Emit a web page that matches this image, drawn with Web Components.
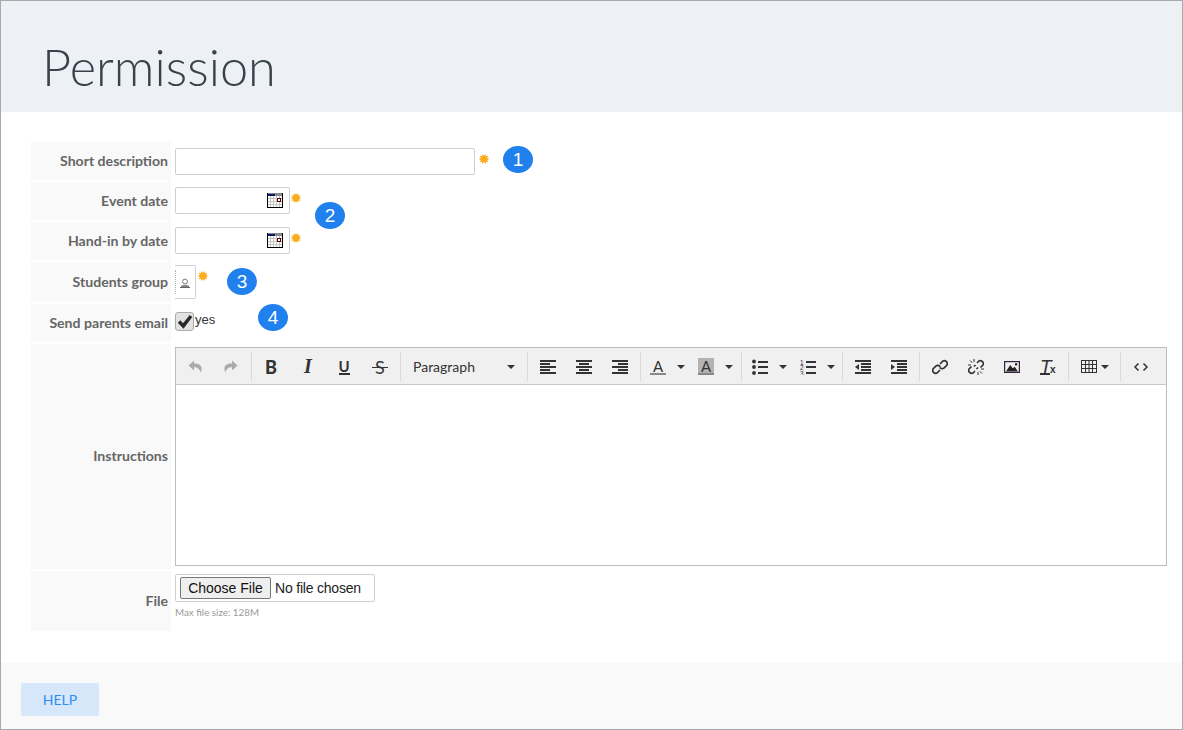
<!DOCTYPE html>
<html lang="en">
<head>
<meta charset="utf-8">
<title>Permission</title>
<style>
html,body{margin:0;padding:0;background:#fff}
body{font-family:Lato,"Liberation Sans",sans-serif;color:#333}
</style>
</head>
<body>
<app-page>
  <page-header slot="header">Permission</page-header>
  <form-grid>
    <form-row label="Short description" pad="6px 0 5px"><text-field width="300"></text-field><req-star gap="4" top="6"></req-star></form-row>
    <form-row label="Event date" pad="5px 0 6px"><date-field></date-field><req-star gap="1" top="6"></req-star></form-row>
    <form-row label="Hand-in by date" pad="5px 0 6px"><date-field></date-field><req-star gap="1" top="6"></req-star></form-row>
    <form-row label="Students group" pad="3px 0"><group-picker></group-picker><req-star gap="2" top="6"></req-star></form-row>
    <form-row label="Send parents email" pad="8px 0 11px"><check-field>yes</check-field></form-row>
    <form-row label="Instructions" pad="3px 0" lift="1"><rich-editor></rich-editor></form-row>
    <form-row label="File" pad="3px 0 12px"><file-field></file-field></form-row>
    <hint-badge x="472" y="4">1</hint-badge>
    <hint-badge x="284" y="60">2</hint-badge>
    <hint-badge x="196" y="126">3</hint-badge>
    <hint-badge x="227" y="162">4</hint-badge>
  </form-grid>
  <page-footer slot="footer"><help-button>HELP</help-button></page-footer>
</app-page>

<script>
function shadow(el, html){ el.attachShadow({mode:'open'}).innerHTML = html; }
const svg16 = (body, w=16, h=16) => `<svg xmlns="http://www.w3.org/2000/svg" width="${w}" height="${h}" viewBox="0 0 ${w} ${h}" aria-hidden="true">${body}</svg>`;
const bars = (rows) => rows.map(([x,y,w,h=2,c='#333']) => `<rect x="${x}" y="${y}" width="${w}" height="${h}" fill="${c}"/>`).join('');
const rays5 = `<g stroke="#333" stroke-width="1" fill="none"><path d="M6 0v3M2 1.500l2.200 2.200M0 6h3M10 16v-3M14 14.500l-2.200-2.200M16 10h-3"/></g>`;

const ICONS = {
  undo: (c)=>svg16(`<path fill="${c}" d="M7 1.500 1.500 6.500 7 11.500V8.300c3.200 0 5.300 1 6.600 5.200.7-1.300 1-2.600 1-3.800C14.600 6.500 11.800 4.500 7 4.600z"/>`),
  redo: (c)=>svg16(`<path fill="${c}" d="M9 1.500 14.500 6.500 9 11.500V8.300c-3.200 0-5.300 1-6.600 5.200-.7-1.300-1-2.600-1-3.800C1.400 6.500 4.200 4.500 9 4.600z"/>`),
  left: ()=>svg16(bars([[0,1,16],[0,4,10],[0,7,16],[0,10,10],[0,13,16]])),
  center: ()=>svg16(bars([[0,1,16],[3,4,10],[0,7,16],[3,10,10],[0,13,16]])),
  right: ()=>svg16(bars([[0,1,16],[6,4,10],[0,7,16],[6,10,10],[0,13,16]])),
  bullist: ()=>svg16(`<circle cx="2" cy="2.500" r="1.900" fill="#333"/><circle cx="2" cy="8" r="1.900" fill="#333"/><circle cx="2" cy="14" r="1.900" fill="#333"/>`+bars([[6,2,10],[6,7,10],[6,13,10]])),
  numlist: ()=>svg16(`<text x="0" y="5.500" font-size="6.500" font-family="Liberation Sans" fill="#402060">1</text><text x="0" y="11" font-size="6.500" font-family="Liberation Sans" fill="#333">2</text><text x="0" y="16.500" font-size="6.500" font-family="Liberation Sans" fill="#333">3</text>`+bars([[6,2,10],[6,7,10],[6,13,10]])),
  outdent: ()=>svg16(bars([[0,1,16],[6,4,10],[6,7,10],[6,10,10],[0,13,16]])+`<path d="M4 5v6L0 8z" fill="#333"/>`),
  indent: ()=>svg16(bars([[0,1,16],[6,4,10],[6,7,10],[6,10,10],[0,13,16]])+`<path d="M0 5v6l4-3z" fill="#333"/>`),
  link: ()=>svg16(`<g fill="none" stroke="#333" stroke-width="1.700" stroke-linecap="round"><path d="M8.500 4.500 11 2a3 3 0 0 1 4 4l-2.800 2.800a3 3 0 0 1-4 0"/><path d="M7.500 11.500 5 14a3 3 0 0 1-4-4l2.800-2.800a3 3 0 0 1 4 0"/></g>`),
  unlink: ()=>svg16(`<g fill="none" stroke="#333" stroke-width="1.600"><path d="M9 4 11 2a3 3 0 0 1 4 4l-2.500 2.500"/><path d="M7 12 5 14a3 3 0 0 1-4-4l2.500-2.500"/><path d="M6 7.500 7.500 6M8.500 10 10 8.500"/></g>`+rays5),
  image: ()=>svg16(`<rect x=".6" y="2.600" width="14.800" height="10.800" fill="none" stroke="#33223c" stroke-width="1.200"/><path d="M2 12.500 6.200 6l2.600 3.200 1.900-1.400 3.300 4.700z" fill="#222"/><rect x="11" y="4.200" width="2.200" height="2.200" fill="#222"/>`),
  table: ()=>svg16(`<g fill="none" stroke="#333"><rect x=".5" y="1.500" width="15" height="12"/><path d="M.5 5.500h15M.5 9.500h15M4.500 1.500v12M8 1.500v12M11.500 1.500v12"/></g>`),
  code: ()=>svg16(`<path d="M5.500 4.500 2 8l3.500 3.500M10.500 4.500 14 8l-3.500 3.500" fill="none" stroke="#333" stroke-width="1.500"/>`),
};

class AppPage extends HTMLElement{ constructor(){ super(); shadow(this,`<style>
  :host{display:flex;flex-direction:column;box-sizing:border-box;width:1183px;height:730px;border:1px solid #a9a9a9;background:#fff;overflow:hidden}
  main{flex:1;padding:30px 15px 0 30px;min-height:0}
</style><slot name="header"></slot><main><slot></slot></main><slot name="footer"></slot>`);} }

class PageHeader extends HTMLElement{ constructor(){ super(); shadow(this,`<style>
  :host{display:block;height:111px;background:#edf1f5;box-sizing:border-box;padding:35px 0 0 41px}
  h1{margin:0;font:300 50.500px/62px Lato,sans-serif;color:#37424c}
</style><h1><slot></slot></h1>`);} }

class FormGrid extends HTMLElement{ constructor(){ super(); shadow(this,`<style>
  :host{display:grid;grid-template-columns:1fr;row-gap:2px;position:relative}
</style><slot></slot>`);} }

class FormRow extends HTMLElement{ constructor(){ super();
  const label=this.getAttribute('label')||'', pad=this.getAttribute('pad')||'0', lift=this.getAttribute('lift')||0;
  shadow(this,`<style>
  :host{display:grid;grid-template-columns:140px 1fr;column-gap:4px;align-items:stretch}
  .l{display:flex;align-items:center;justify-content:flex-end;background:#f9f9f9;padding:0 3px ${lift}px 0;box-sizing:border-box;font:700 14.100px/16px Lato,sans-serif;color:#666}
  .c{display:flex;align-items:flex-start;padding:${pad};min-width:0}
</style><div class="l">${label}</div><div class="c"><slot></slot></div>`);} }

class TextField extends HTMLElement{ constructor(){ super();
  shadow(this,`<style>
  :host{display:block;box-sizing:border-box;width:${this.getAttribute('width')||300}px;height:27px;border:1px solid #c9d0d6;border-radius:2px;background:#fff}
</style>`);} }

class DateField extends HTMLElement{ constructor(){ super();
  const grid=[3,6,9,12].map(x=>`<path d="M${x+.5} 3v11" stroke="#c4c4c4"/>`).join('')+[5,8,11].map(y=>`<path d="M1 ${y+.5}h14" stroke="#c4c4c4"/>`).join('');
  shadow(this,`<style>
  :host{display:flex;align-items:center;justify-content:flex-end;box-sizing:border-box;width:115px;height:27px;border:1px solid #c9d0d6;border-radius:2px;background:#fff;padding-right:6px}
  svg{display:block}
</style>${svg16(`<rect width="16" height="15" fill="#fff"/>${grid}<rect x="0" y="0" width="16" height="3" fill="#8a8a8a"/><rect x="1" y="1" width="7" height="2" fill="#0a1a66"/><rect x="0" y="0" width="1" height="15" fill="#000"/><rect x="15" y="0" width="1" height="15" fill="#000"/><rect x="0" y="14" width="16" height="1" fill="#000"/><rect x="10.500" y="5.500" width="3" height="3" fill="#fff" stroke="#600"/>`,16,15)}`);} }

class ReqStar extends HTMLElement{ constructor(){ super();
  let rays='';
  for(let i=0;i<10;i++){const a=i*Math.PI/5;const p=(r,t)=>`${(5+r*Math.cos(t)).toFixed(2)} ${(5+r*Math.sin(t)).toFixed(2)}`;
    rays+=`<path d="M${p(3,a-.34)}L${p(5.400,a)}L${p(3,a+.34)}z"/>`;}
  shadow(this,`<style>
  :host{display:block;width:10px;height:10px;margin-left:${this.getAttribute('gap')||1}px;margin-top:${this.getAttribute('top')||5}px;flex:none}
  svg{display:block}
</style>${svg16(`<g fill="#fbac1c">${rays}<circle cx="5" cy="5" r="3.300"/></g>`,10,10)}`);} }

class GroupPicker extends HTMLElement{ constructor(){ super();
  shadow(this,`<style>
  :host{display:block;position:relative;box-sizing:border-box;width:21px;height:34px;border:1px solid #c9d0d6;border-left:0;border-radius:0 2px 2px 0;background:#fff}
  .d{position:absolute;left:0;top:4px;height:24px;border-left:1px dotted #b5b5b5}
  svg{position:absolute;left:5px;top:12px}
</style><div class="d"></div>${svg16(`<circle cx="5" cy="3.500" r="2.400" fill="none" stroke="#777"/><path d="M2.500 7.500h5L9 8.500H1z" fill="none" stroke="#777" stroke-width=".9"/><path d="M0 9.500h10" stroke="#666"/>`,10,10)}`);} }

class CheckField extends HTMLElement{ constructor(){ super();
  shadow(this,`<style>
  :host{display:flex;align-items:flex-start;font:13px/15px "Liberation Sans",sans-serif;color:#333}
  .b{box-sizing:border-box;width:19px;height:19px;border:1px solid #aaa;border-radius:3px;background:#e2e2e2;display:flex;align-items:center;justify-content:center}
  .t{margin-left:1px}
</style><div class="b">${svg16(`<path d="M.8 8.800 3.300 6.300 6 9.300 12.700 1 15.300 3 6.500 14.800z" fill="#2a2a2a"/>`)}</div><div class="t"><slot></slot></div>`);} }

class TbButton extends HTMLElement{ constructor(){ super();
  shadow(this,`<style>
  :host{display:flex;align-items:center;justify-content:center;width:36px;height:100%;flex:none}
</style><slot></slot>`);} }

class TbSplit extends HTMLElement{ constructor(){ super();
  shadow(this,`<style>
  :host{display:flex;align-items:center;width:48px;height:100%;flex:none}
  .i{width:30px;display:flex;justify-content:center}
  .c{margin-left:4px;border:4px solid transparent;border-top-color:#333;border-bottom:0}
</style><div class="i"><slot></slot></div><div class="c"></div>`);} }

class RichEditor extends HTMLElement{ constructor(){ super();
  const g='#aaa';
  const btn=(h)=>`<tb-button>${h}</tb-button>`;
  const split=(h)=>`<tb-split>${h}</tb-split>`;
  shadow(this,`<style>
  :host{display:block;flex:1;box-sizing:border-box;height:219px;border:1px solid #bdbdbd;background:#fff;min-width:0}
  .bar{display:flex;height:37px;background:#f0f0f0;border-bottom:1px solid #c8c8c8;box-sizing:border-box;align-items:stretch;padding:4px 0}
  .g{display:flex;justify-content:center;align-items:center;box-sizing:border-box;border-right:1px solid #d9d9d9;flex:none;height:29px}
  .g:last-child{border-right:0;flex:1;justify-content:flex-start;padding-left:2px}
  svg{display:block}
  .txt{font-family:Lato,sans-serif;color:#333;line-height:16px;display:block;text-align:center}
  .B{font-weight:900;font-size:18px;margin-right:2px}
  .I{font:italic 700 20px "Liberation Serif",serif}
  .U{font-weight:700;font-size:15px;border-bottom:2px solid #333;line-height:14px;width:11px}
  .S{position:relative;font-size:18px;width:16px}
  .S:after{content:"";position:absolute;left:0;right:0;top:8px;height:1px;background:#333}
  .A{font-size:15px;font-weight:400;width:16px;height:17px;line-height:16px;box-sizing:border-box;border-bottom:2px solid #888}
  .A2{background:linear-gradient(#b3b3b3 0 15px,transparent 15px)}
  .Tx{position:relative;width:16px;height:16px;font:italic 400 19px/15px "Liberation Sans",sans-serif;color:#333;text-align:left}
  .Tx b{position:absolute;left:10px;top:6px;font:700 10px/10px "Liberation Sans",sans-serif}
  .Tx:after{content:"";position:absolute;left:0;bottom:0;width:10px;height:2px;background:#333}
  .para{display:flex;align-items:center;justify-content:space-between;width:126px;box-sizing:border-box;padding:0 12px 0 12px;font:400 14px/16px Lato,sans-serif;color:#333}
  .para i{border:4px solid transparent;border-top-color:#333;border-bottom:0}
  .tbl{display:flex;align-items:center;gap:4px}
  .tbl i{border:4px solid transparent;border-top-color:#333;border-bottom:0}
  .edit{height:180px}
</style>
<div class="bar">
  <div class="g" style="width:76px;padding-right:2px">${btn(ICONS.undo(g))}${btn(ICONS.redo(g))}</div>
  <div class="g" style="width:149px">
    ${btn('<span class="txt B">B</span>')}${btn('<span class="txt I">I</span>')}${btn('<span class="txt U">U</span>')}${btn('<span class="txt S">S</span>')}</div>
  <div class="g" style="width:127px"><div class="para"><span>Paragraph</span><i></i></div></div>
  <div class="g" style="width:113px">${btn(ICONS.left())}${btn(ICONS.center())}${btn(ICONS.right())}</div>
  <div class="g" style="width:101px">${split('<span class="txt A">A</span>')}${split('<span class="txt A A2">A</span>')}</div>
  <div class="g" style="width:101px;padding-left:2px">${split(ICONS.bullist())}${split(ICONS.numlist())}</div>
  <div class="g" style="width:77px">${btn(ICONS.outdent())}${btn(ICONS.indent())}</div>
  <div class="g" style="width:149px">${btn(ICONS.link())}${btn(ICONS.unlink())}${btn(ICONS.image())}${btn('<span class="txt Tx">T<b>x</b></span>')}</div>
  <div class="g" style="width:52px"><div class="tbl">${ICONS.table()}<i></i></div></div>
  <div class="g">${btn(ICONS.code())}</div>
</div>
<div class="edit"></div>`);} }

class FileField extends HTMLElement{ constructor(){ super();
  shadow(this,`<style>
  :host{display:block;width:200px}
  .f{display:flex;align-items:center;box-sizing:border-box;height:28px;border:1px solid #c9d0d6;border-radius:2px;padding:0 4px;font:14px/16px "Liberation Sans",sans-serif;color:#222}
  .f span{letter-spacing:-.2px}
  button{box-sizing:border-box;width:91px;height:22px;padding:0;margin-right:4px;border:1px solid #777;border-radius:2px;background:#efefef;font:14px/16px "Liberation Sans",sans-serif;color:#111}
  small{display:block;margin-top:3px;font:400 9.800px/14px Lato,sans-serif;color:#999}
</style><div class="f"><button type="button">Choose File</button><span>No file chosen</span></div><small>Max file size: 128M</small>`);} }

class HintBadge extends HTMLElement{ constructor(){ super();
  shadow(this,`<style>
  :host{position:absolute;left:${this.getAttribute('x')}px;top:${this.getAttribute('y')}px;width:30px;height:27px;border-radius:50%;background:#1f80ee;color:#fff;display:flex;align-items:center;justify-content:center;font:19px/27px "Liberation Sans",sans-serif}
</style><slot></slot>`);} }

class PageFooter extends HTMLElement{ constructor(){ super();
  shadow(this,`<style>
  :host{display:block;height:66px;background:#f9f9f9;box-sizing:border-box;padding:20px 0 0 20px}
</style><slot></slot>`);} }

class HelpButton extends HTMLElement{ constructor(){ super();
  shadow(this,`<style>
  :host{display:flex;align-items:center;justify-content:center;width:78px;height:33px;background:#d5e7f8;border-radius:2px;color:#2f8fef;font:400 14px/16px Lato,sans-serif}
</style><slot></slot>`);} }

const defs={'app-page':AppPage,'page-header':PageHeader,'form-grid':FormGrid,'form-row':FormRow,'text-field':TextField,'date-field':DateField,'req-star':ReqStar,'group-picker':GroupPicker,'check-field':CheckField,'tb-button':TbButton,'tb-split':TbSplit,'rich-editor':RichEditor,'file-field':FileField,'hint-badge':HintBadge,'page-footer':PageFooter,'help-button':HelpButton};
for(const k in defs) customElements.define(k,defs[k]);
</script>
</body>
</html>
